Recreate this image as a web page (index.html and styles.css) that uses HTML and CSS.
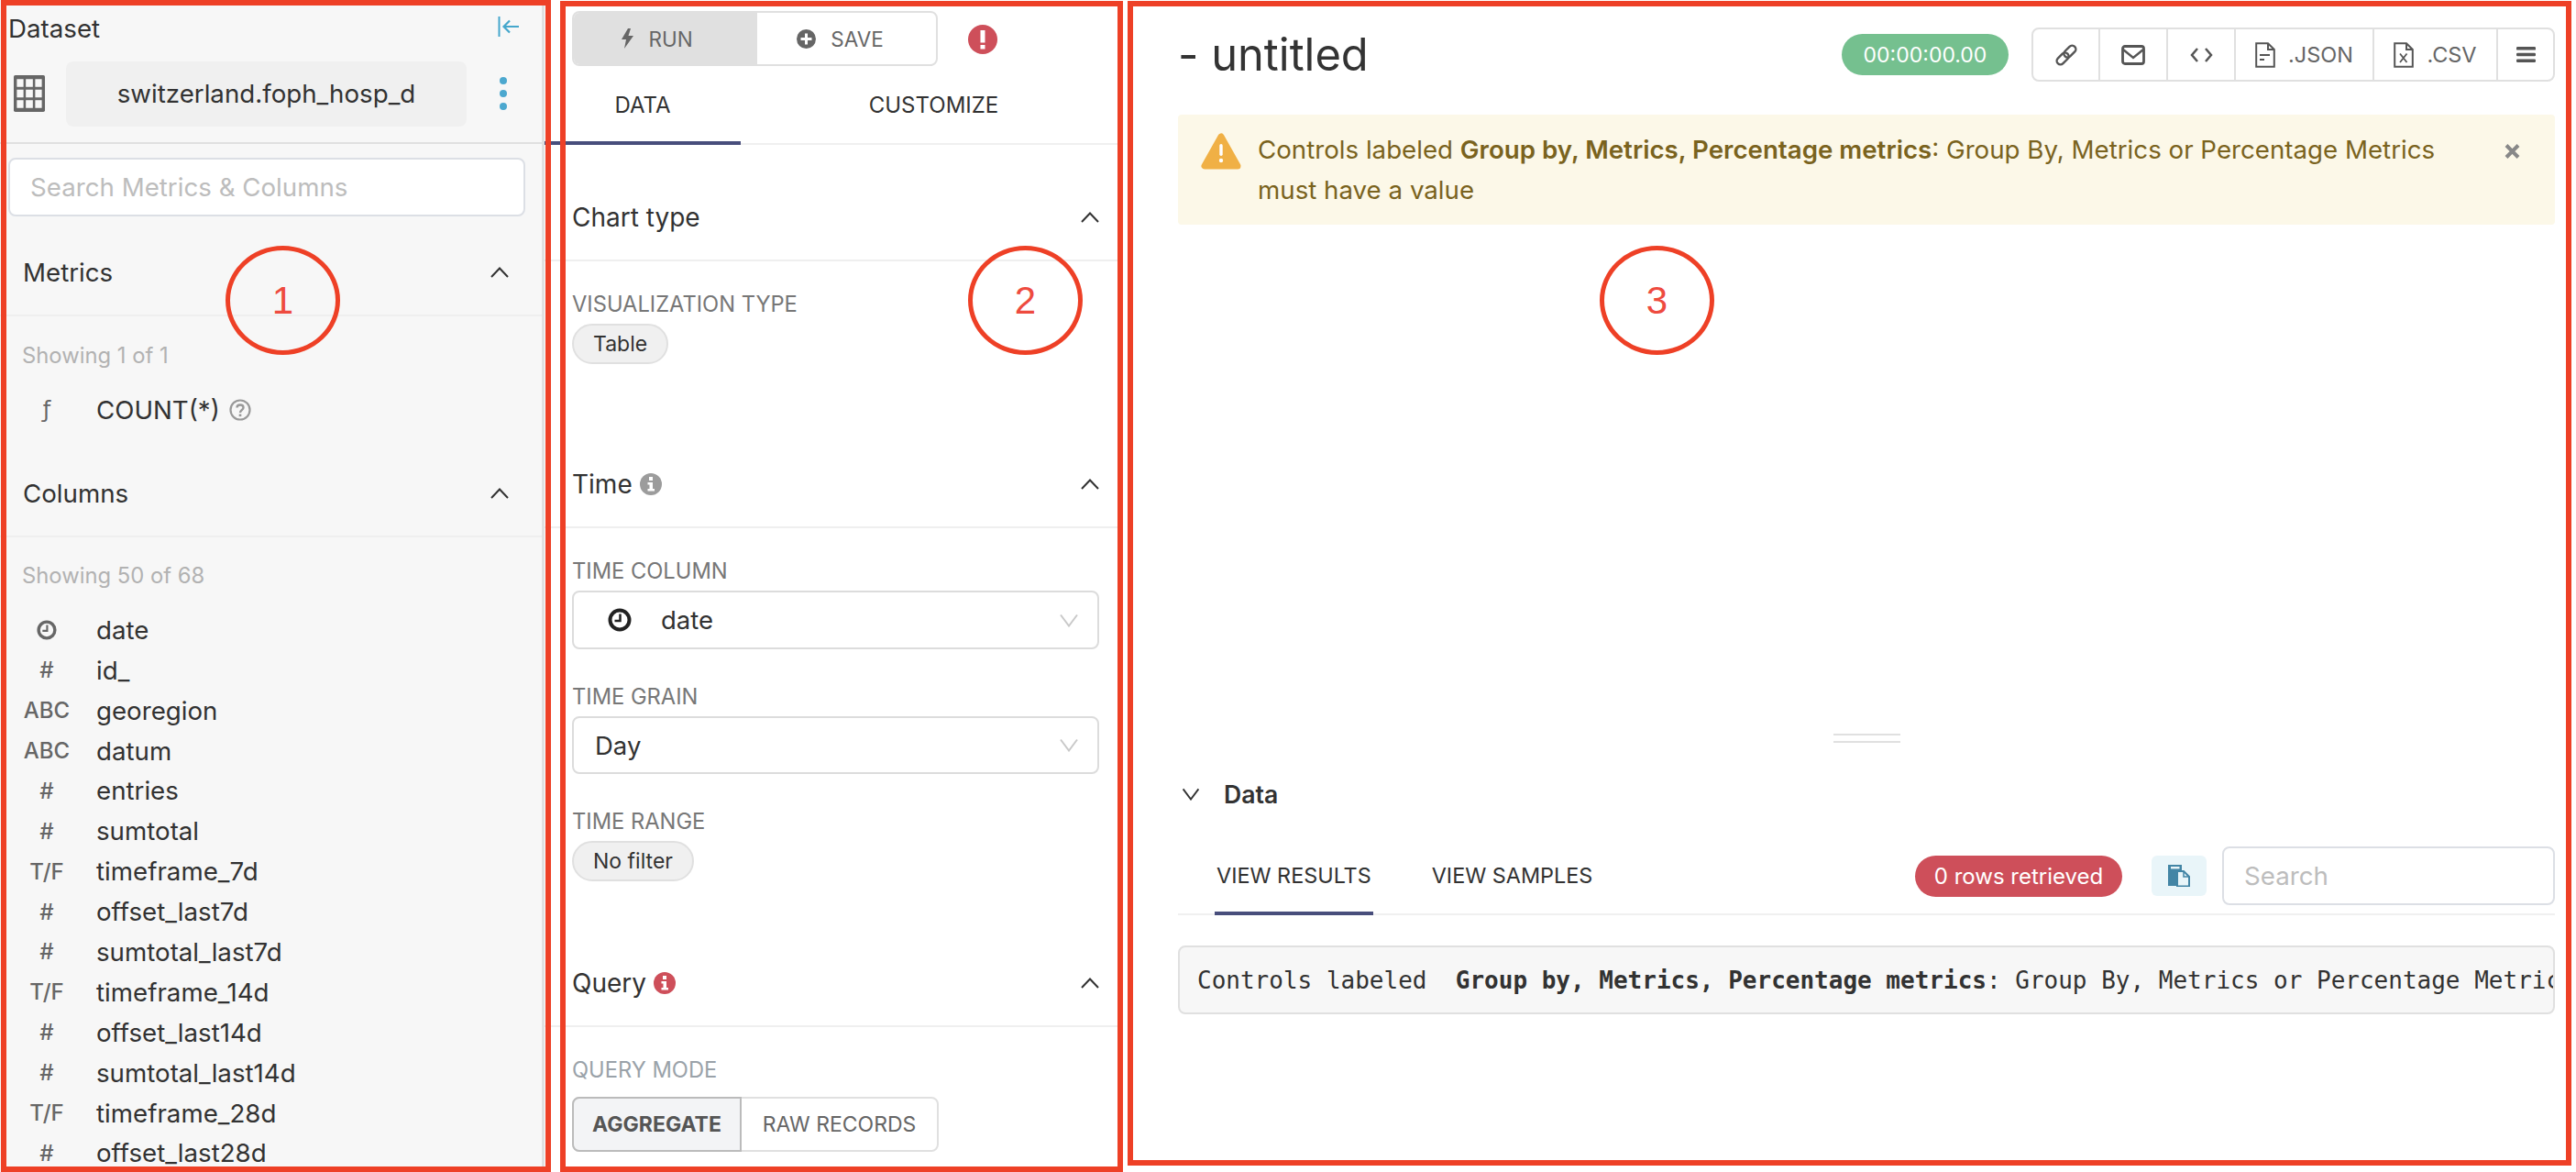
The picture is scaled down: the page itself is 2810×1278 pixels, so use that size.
FILE: index.html
```html
<!DOCTYPE html>
<html lang="en">
<head>
<meta charset="utf-8">
<title>Explore - untitled</title>
<link rel="stylesheet" href="styles.css">
</head>
<body>
<svg class="defs" width="0" height="0" aria-hidden="true">
  <symbol id="chev-up" viewBox="0 0 20 12"><path d="M1 11 10 1.5 19 11" fill="none" stroke="currentColor" stroke-width="2"/></symbol>
  <symbol id="chev-down" viewBox="0 0 20 15"><path d="M1 1.500 10 13.500 19 1.500" fill="none" stroke="currentColor" stroke-width="2"/></symbol>
  <symbol id="clock" viewBox="0 0 26 26"><circle cx="13" cy="13" r="10.500" fill="none" stroke="currentColor" stroke-width="4"/><path d="M13.500 6.500V14H7.500" fill="none" stroke="currentColor" stroke-width="2.500"/></symbol>
  <symbol id="info" viewBox="0 0 24 24"><circle cx="12" cy="12" r="12" fill="currentColor"/><rect x="10" y="4" width="4" height="4" fill="#fff"/><path d="M8.500 10H14V17H16V19.500H8.500V17H10.500V12.500H8.500Z" fill="#fff"/></symbol>
</svg>
<div class="app">
  <aside class="sidebar">
    <div class="ds-head">
      <span>Dataset</span>
      <svg class="i-collapse" viewBox="0 0 24 22"><path d="M1.500 0V22" stroke="currentColor" stroke-width="2" fill="none"/><path d="M23 11H7M13 4.500 6.500 11 13 17.500" stroke="currentColor" stroke-width="2.200" fill="none"/></svg>
    </div>
    <div class="ds-row">
      <svg class="i-table" viewBox="0 0 40 47"><rect width="40" height="47" rx="2" fill="#666"/><g fill="#f7f7f7"><rect x="4" y="5" width="8.500" height="10"/><rect x="15.500" y="5" width="9" height="10"/><rect x="27.500" y="5" width="8.500" height="10"/><rect x="4" y="18.500" width="8.500" height="10"/><rect x="15.500" y="18.500" width="9" height="10"/><rect x="27.500" y="18.500" width="8.500" height="10"/><rect x="4" y="32" width="8.500" height="10"/><rect x="15.500" y="32" width="9" height="10"/><rect x="27.500" y="32" width="8.500" height="10"/></g></svg>
      <div class="ds-name">switzerland.foph_hosp_d</div>
      <svg class="i-dots" viewBox="0 0 8 36"><circle cx="4" cy="4" r="4"/><circle cx="4" cy="18" r="4"/><circle cx="4" cy="32" r="4"/></svg>
    </div>
    <div class="ds-search"><div class="input">Search Metrics &amp; Columns</div></div>

    <div class="side-head"><span>Metrics</span><svg class="chev"><use href="#chev-up"/></svg></div>
    <div class="showing">Showing 1 of 1</div>
    <div class="field"><span class="type type-f">ƒ</span><span>COUNT(*)</span>
      <svg class="i-help" viewBox="0 0 24 24"><circle cx="12" cy="12" r="10.500" fill="none" stroke="#999" stroke-width="2.200"/><path d="M8.500 9.500C8.500 5.500 15.500 5.500 15.500 9.500 15.500 12 12 12 12 15" fill="none" stroke="#999" stroke-width="2.400"/><rect x="10.700" y="16.500" width="2.600" height="2.600" fill="#999"/></svg>
    </div>

    <div class="side-head side-head-next"><span>Columns</span><svg class="chev"><use href="#chev-up"/></svg></div>
    <div class="showing showing-next">Showing 50 of 68</div>
    <div class="field"><span class="type"><svg class="i-clock-s"><use href="#clock"/></svg></span><span>date</span></div>
    <div class="field"><span class="type">#</span><span>id_</span></div>
    <div class="field"><span class="type">ABC</span><span>georegion</span></div>
    <div class="field"><span class="type">ABC</span><span>datum</span></div>
    <div class="field"><span class="type">#</span><span>entries</span></div>
    <div class="field"><span class="type">#</span><span>sumtotal</span></div>
    <div class="field"><span class="type">T/F</span><span>timeframe_7d</span></div>
    <div class="field"><span class="type">#</span><span>offset_last7d</span></div>
    <div class="field"><span class="type">#</span><span>sumtotal_last7d</span></div>
    <div class="field"><span class="type">T/F</span><span>timeframe_14d</span></div>
    <div class="field"><span class="type">#</span><span>offset_last14d</span></div>
    <div class="field"><span class="type">#</span><span>sumtotal_last14d</span></div>
    <div class="field"><span class="type">T/F</span><span>timeframe_28d</span></div>
    <div class="field"><span class="type">#</span><span>offset_last28d</span></div>
  </aside>

  <section class="controls">
    <div class="run-row">
      <div class="run-group">
        <div class="run-btn run-active">
          <svg class="i-bolt" viewBox="0 0 13 22"><path d="M7 0 0 12H5L3 22 13 8H7.500L10 0Z" fill="#666"/></svg>
          <span>RUN</span>
        </div>
        <div class="run-btn run-save">
          <svg class="i-plus" viewBox="0 0 21 21"><circle cx="10.500" cy="10.500" r="10.500" fill="#666"/><path d="M9 4.500H12V9H16.500V12H12V16.500H9V12H4.500V9H9Z" fill="#fff"/></svg>
          <span>SAVE</span>
        </div>
      </div>
      <svg class="i-alert" viewBox="0 0 32 32"><circle cx="16" cy="16" r="16" fill="#ce4f5a"/><rect x="13.500" y="6" width="5" height="13.500" fill="#fff"/><rect x="13.500" y="22" width="5" height="4.500" fill="#fff"/></svg>
    </div>
    <div class="tabs">
      <div class="tab tab-on tab-data">DATA</div>
      <div class="tab tab-custom">CUSTOMIZE</div>
    </div>

    <div class="sec sec-chart">
      <div class="sec-head"><span class="sec-title">Chart type</span><svg class="chev"><use href="#chev-up"/></svg></div>
      <div class="sec-body">
        <div class="control">
          <div class="label">VISUALIZATION TYPE</div>
          <span class="pill">Table</span>
        </div>
      </div>
    </div>

    <div class="sec sec-time">
      <div class="sec-head"><span class="sec-title">Time<svg class="i-info i-info-gray"><use href="#info"/></svg></span><svg class="chev"><use href="#chev-up"/></svg></div>
      <div class="sec-body">
        <div class="control">
          <div class="label">TIME COLUMN</div>
          <div class="select select-icon"><svg class="i-clock-l"><use href="#clock"/></svg><span>date</span><svg class="chev-sel"><use href="#chev-down"/></svg></div>
        </div>
        <div class="control">
          <div class="label">TIME GRAIN</div>
          <div class="select select-short"><span>Day</span><svg class="chev-sel"><use href="#chev-down"/></svg></div>
        </div>
        <div class="control">
          <div class="label">TIME RANGE</div>
          <span class="pill pill-wide">No filter</span>
        </div>
      </div>
    </div>

    <div class="sec">
      <div class="sec-head"><span class="sec-title">Query<svg class="i-info i-info-red"><use href="#info"/></svg></span><svg class="chev"><use href="#chev-up"/></svg></div>
      <div class="sec-body">
        <div class="label label-muted">QUERY MODE</div>
        <div class="seg"><div class="seg-item seg-on">AGGREGATE</div><div class="seg-item">RAW RECORDS</div></div>
      </div>
    </div>
  </section>

  <main class="main">
    <header class="main-head">
      <h1 class="title">- untitled</h1>
      <span class="timer">00:00:00.00</span>
      <div class="tools">
        <div class="tool tool-link"><svg class="i-link" viewBox="0 0 26 26"><g fill="none" stroke="#555" stroke-width="2.400" transform="rotate(-45 13 13)"><rect x="0" y="9" width="15" height="8" rx="4"/><rect x="11" y="9" width="15" height="8" rx="4"/></g></svg></div>
        <div class="tool tool-mail"><svg class="i-mail" viewBox="0 0 26 22"><rect x="1.500" y="1.500" width="23" height="19" rx="2.500" fill="none" stroke="#555" stroke-width="2.800"/><path d="M2 5 13 14 24 5" fill="none" stroke="#555" stroke-width="2.400"/></svg></div>
        <div class="tool tool-code"><svg class="i-code" viewBox="0 0 25 16"><path d="M8 1 2 8 8 15M17 1 23 8 17 15" fill="none" stroke="#555" stroke-width="2.500"/></svg></div>
        <div class="tool tool-json"><svg class="i-file" viewBox="0 0 22 28"><path d="M1.200 1.200H14L20.800 8V26.800H1.200Z M14 1.200V8H20.800" fill="none" stroke="#555" stroke-width="2"/><path d="M5 14H16M5 19H10" stroke="#555" stroke-width="2" fill="none"/></svg><span>.JSON</span></div>
        <div class="tool tool-csv"><svg class="i-file" viewBox="0 0 22 28"><path d="M1.200 1.200H14L20.800 8V26.800H1.200Z M14 1.200V8H20.800" fill="none" stroke="#555" stroke-width="2"/><path d="M7 12.500 14.500 22M14.500 12.500 7 22" stroke="#555" stroke-width="1.800" fill="none"/></svg><span>.CSV</span></div>
        <div class="tool tool-menu"><svg class="i-menu" viewBox="0 0 21 17"><rect width="21" height="3.600" rx="1.200" fill="#555"/><rect y="6.700" width="21" height="3.600" rx="1.200" fill="#555"/><rect y="13.400" width="21" height="3.600" rx="1.200" fill="#555"/></svg></div>
      </div>
    </header>

    <div class="alert">
      <svg class="i-warn" viewBox="0 0 44 40"><path d="M22 4 4 36H40Z" fill="#f0b045" stroke="#f0b045" stroke-width="7" stroke-linejoin="round"/><rect x="20.300" y="12" width="3.400" height="13" rx="1.700" fill="#fff"/><circle cx="22" cy="30" r="2.200" fill="#fff"/></svg>
      <p class="alert-text">Controls labeled <strong>Group by, Metrics, Percentage metrics</strong>: Group By, Metrics or Percentage Metrics must have a value</p>
      <svg class="i-close" viewBox="0 0 17 16"><path d="M2 1.500 15 14.500M15 1.500 2 14.500" stroke="#888" stroke-width="4" fill="none"/></svg>
    </div>

    <div class="handle"></div>

    <div class="data-head"><svg class="chev-data"><use href="#chev-down"/></svg><span>Data</span></div>

    <div class="data-bar">
      <div class="data-tabs">
        <div class="dtab dtab-on">VIEW RESULTS</div>
        <div class="dtab">VIEW SAMPLES</div>
      </div>
      <div class="data-tools">
        <span class="rows">0 rows retrieved</span>
        <div class="copy"><svg class="i-copy" viewBox="0 0 24 24"><path d="M0 0H15V6H10V23H0Z" fill="#4385a5"/><rect x="3" y="2" width="9.500" height="2.400" fill="#e9f5f9"/><path d="M10 7H17L23 13V23.500H10Z" fill="#e9f5f9" stroke="#4385a5" stroke-width="2"/><path d="M17 7V13H23" fill="none" stroke="#4385a5" stroke-width="1.500"/></svg></div>
        <div class="input input-search">Search</div>
      </div>
    </div>

    <div class="errorbox"><pre class="errortext">Controls labeled  <strong>Group by, Metrics, Percentage metrics</strong>: Group By, Metrics or Percentage Metrics must have a value</pre></div>
  </main>
</div>

<div class="mark mark-1"></div>
<div class="mark mark-2"></div>
<div class="mark mark-3"></div>
<div class="ring ring-1">1</div>
<div class="ring ring-2">2</div>
<div class="ring ring-3">3</div>
</body>
</html>
```

FILE: styles.css
```css
* { box-sizing: border-box; }
html, body { margin: 0; padding: 0; background: #fff; }
body {
  width: 2810px;
  height: 1278px;
  overflow: hidden;
  position: relative;
  font-family: Inter, "Noto Sans", sans-serif;
  font-size: 27.700px;
  color: #323232;
}
.defs { position: absolute; }
svg { display: block; flex: none; }

.app { display: flex; width: 2810px; height: 1278px; overflow: hidden; }

/* left panel */
.sidebar {
  width: 594px;
  flex: none;
  height: 1278px;
  overflow: hidden;
  background: #f7f7f7;
  border-right: 3px solid #e0e0e0;
}
.ds-head {
  height: 62px;
  padding: 0 24px 0 9px;
  display: flex;
  align-items: center;
  justify-content: space-between;
}
.i-collapse { width: 24px; height: 22px; color: #45a7cc; margin-top: -4px; }
.ds-row {
  height: 95px;
  padding: 5px 0 18px 12px;
  display: flex;
  align-items: center;
  border-bottom: 2px solid #e0e0e0;
}
.i-table { width: 40px; height: 40px; }
.ds-name {
  width: 437px;
  height: 71px;
  margin-left: 20px;
  background: #f0f0f0;
  border-radius: 8px;
  display: flex;
  align-items: center;
  justify-content: center;
}
.i-dots { width: 8px; height: 36px; margin-left: 36px; fill: #4ca8cf; }
.ds-search { padding: 15px 18px 15px 9px; }
.input {
  height: 64px;
  background: #fff;
  border: 2px solid #dcdfe5;
  border-radius: 8px;
  display: flex;
  align-items: center;
  padding-left: 22px;
  color: #bdbdbd;
}
.side-head {
  height: 94px;
  padding: 0 36px 0 25px;
  display: flex;
  align-items: center;
  justify-content: space-between;
  border-bottom: 2px solid #efefef;
}
.side-head-next { margin-top: 23px; }
.chev { width: 20px; height: 12px; color: #323232; }
.showing {
  margin: 21px 0 15px;
  height: 44px;
  line-height: 44px;
  padding-left: 24px;
  color: #b2b2b2;
  font-size: 23.800px;
}
.showing-next { margin-top: 20px; }
.field {
  height: 43.9px;
  display: flex;
  align-items: center;
  color: #323232;
}
.type {
  width: 105px;
  flex: none;
  text-align: center;
  padding-right: 3px;
  color: #666;
  font-size: 24px;
  font-weight: 500;
  display: flex;
  justify-content: center;
}
.type-f { font-family: "DejaVu Sans", sans-serif; font-weight: 400; font-size: 24px; }
.i-clock-s { width: 22px; height: 22px; color: #666; }
.i-help { width: 24px; height: 24px; margin-left: 10px; }

/* controls */
.controls { width: 631px; flex: none; height: 1278px; overflow: hidden; }
.run-row { padding: 12px 0 0 30px; display: flex; height: 72px; align-items: flex-start; }
.run-group {
  width: 399px;
  height: 60px;
  display: flex;
  border: 2px solid #e0e0e0;
  border-radius: 8px;
  overflow: hidden;
  color: #666;
}
.run-btn {
  flex: 1;
  display: flex;
  align-items: center;
  justify-content: center;
  gap: 16px;
  padding-right: 18px;
  font-size: 22.500px;
}
.run-save { padding-right: 14px; }
.run-active { background: #e0e0e0; flex: none; width: 200px; }
.i-bolt { width: 13px; height: 22px; }
.i-plus { width: 21px; height: 21px; }
.i-alert { width: 32px; height: 32px; margin: 15px 0 0 33px; }
.tabs { display: flex; height: 86px; border-bottom: 2px solid #f0f0f0; }
.tab {
  height: 86px;
  padding-top: 2px;
  display: flex;
  align-items: center;
  justify-content: center;
  font-size: 24px;
  border-bottom: 4px solid transparent;
}
.tab-data { width: 214px; }
.tab-custom { flex: 1; padding-left: 4px; }
.tab-on { border-bottom-color: #484e7c; }
.sec-chart { margin-top: 33px; }
.sec-head {
  height: 94px;
  padding: 0 26px 0 30px;
  display: flex;
  align-items: center;
  justify-content: space-between;
  border-bottom: 2px solid #efefef;
}
.sec-title { display: flex; align-items: center; font-size: 28px; }
.sec-body { padding: 33px 26px 0 30px; }
.sec-chart .sec-body { padding-bottom: 85px; }
.sec-time .sec-body { padding-bottom: 65px; }
.label { height: 28px; line-height: 28px; font-size: 23.700px; color: #777; margin-bottom: 7px; }
.label-muted { color: #9aa2a9; margin-bottom: 15px; }
.control + .control { margin-top: 38px; }
.pill {
  display: inline-flex;
  align-items: center;
  height: 44px;
  padding: 0 21px;
  background: #f0f0f0;
  border: 2px solid #e0e0e0;
  border-radius: 22px;
  font-size: 23px;
  vertical-align: top;
}
.select {
  height: 64px;
  border: 2px solid #dcdcdc;
  border-radius: 8px;
  display: flex;
  align-items: center;
  padding: 0 21px 0 23px;
  font-size: 27.500px;
}
.select-short { height: 63px; }
.select-icon { padding-left: 37px; }
.select-icon span { margin-left: 32px; }
.chev-sel { width: 20px; height: 15px; color: #c9c9c9; margin-left: auto; }
.i-clock-l { width: 26px; height: 26px; color: #222; }
.i-info { width: 24px; height: 24px; margin-left: 8px; }
.i-info-gray { color: #9c9c9c; }
.i-info-red { color: #ce4f5a; }
.seg {
  width: 400px;
  height: 60px;
  display: flex;
  border: 2px solid #e0e0e0;
  border-radius: 8px;
  color: #666;
  font-size: 23px;
}
.seg-item { flex: 1; display: flex; align-items: center; justify-content: center; }
.seg-on {
  flex: none;
  width: 185px;
  margin: -2px 0 -2px -2px;
  background: #f3f4f6;
  border: 2px solid #bbb;
  border-radius: 8px 0 0 8px;
  font-weight: 700;
  color: #555;
}

/* main */
.main { flex: 1; min-width: 0; padding: 30px 23px 0 60px; }
.main-head { display: flex; align-items: center; height: 59px; }
.title { margin: 0 auto 0 0; font-size: 48.800px; font-weight: 400; color: #333; }
.timer {
  width: 182px;
  height: 45px;
  border-radius: 23px;
  background: #75c08f;
  color: #fff;
  font-size: 23px;
  display: flex;
  align-items: center;
  justify-content: center;
}
.tools {
  width: 571px;
  height: 59px;
  margin-left: 25px;
  display: flex;
  border: 2px solid #e0e0e0;
  border-radius: 8px;
  color: #666;
  font-size: 23.500px;
}
.tool {
  display: flex;
  align-items: center;
  justify-content: center;
  gap: 14px;
  border-right: 2px solid #e0e0e0;
}
.tool-link { width: 73px; }
.tool-mail { width: 74px; }
.tool-code { width: 74px; }
.tool-json { width: 151px; }
.tool-csv { width: 135px; }
.tool-menu { flex: 1; border-right: 0; }
.i-link { width: 26px; height: 26px; }
.i-mail { width: 26px; height: 22px; }
.i-code { width: 25px; height: 16px; }
.i-file { width: 22px; height: 28px; }
.i-menu { width: 21px; height: 17px; }
.alert {
  margin-top: 36px;
  height: 120px;
  padding: 20px 38px 0 25px;
  background: #fcf8e8;
  border-radius: 4px;
  display: flex;
  align-items: flex-start;
  color: #7a631e;
}
.i-warn { width: 44px; height: 40px; }
.alert-text { margin: -4px 0 0 18px; width: 1330px; line-height: 44px; }
.alert-text strong { font-weight: 600; }
.i-close { width: 17px; height: 16px; margin: 12px 0 0 auto; }
.handle {
  width: 73px;
  height: 10px;
  margin: 555px auto 0;
  border-top: 2px solid #e0e0e0;
  border-bottom: 2px solid #e0e0e0;
}
.data-head {
  height: 44px;
  margin-top: 34px;
  padding-left: 4px;
  display: flex;
  align-items: center;
  font-weight: 600;
  font-size: 26.600px;
}
.chev-data { width: 20px; height: 14px; color: #323232; margin-right: 26px; }
.data-bar {
  height: 75px;
  margin-top: 35px;
  padding-left: 40px;
  display: flex;
  justify-content: space-between;
  border-bottom: 2px solid #f0f0f0;
}
.data-tabs { display: flex; gap: 62px; }
.dtab {
  height: 75px;
  padding: 0 2px 9px;
  display: flex;
  align-items: center;
  font-size: 23.400px;
  border-bottom: 4px solid transparent;
}
.dtab-on { border-bottom-color: #484e7c; }
.data-tools { display: flex; align-items: center; height: 64px; }
.rows {
  width: 226px;
  height: 45px;
  border-radius: 23px;
  background: #ce4f5a;
  color: #fff;
  font-size: 24px;
  display: flex;
  align-items: center;
  justify-content: center;
}
.copy {
  width: 60px;
  height: 44px;
  margin: 0 17px 0 32px;
  border-radius: 6px;
  background: #e9f5f9;
  display: flex;
  align-items: center;
  justify-content: center;
}
.i-copy { width: 24px; height: 24px; }
.input-search { width: 363px; }
.errorbox {
  margin-top: 33px;
  height: 75px;
  padding: 0 0 0 19px;
  background: #f7f7f7;
  border: 2px solid #e0e0e0;
  border-radius: 8px;
  overflow: hidden;
  display: flex;
  align-items: center;
}
.errortext {
  margin: 0;
  font-family: "DejaVu Sans Mono", "Liberation Mono", monospace;
  font-size: 26px;
  color: #323232;
  white-space: pre;
}

/* annotation overlays */
.mark { position: absolute; border: 6px solid #ee4026; }
.mark-1 { left: 1px; top: 0; width: 600px; height: 1278px; }
.mark-2 { left: 611px; top: 1px; width: 614px; height: 1277px; }
.mark-3 { left: 1230px; top: 1px; width: 1575px; height: 1270px; }
.ring {
  position: absolute;
  top: 268px;
  width: 125px;
  height: 119px;
  border: 5px solid #ee4026;
  border-radius: 50%;
  display: flex;
  align-items: center;
  justify-content: center;
  font-family: "Liberation Sans", Arial, sans-serif;
  font-size: 42px;
  color: #ee4b3f;
}
.ring-1 { left: 246px; }
.ring-2 { left: 1056px; }
.ring-3 { left: 1745px; }
```
